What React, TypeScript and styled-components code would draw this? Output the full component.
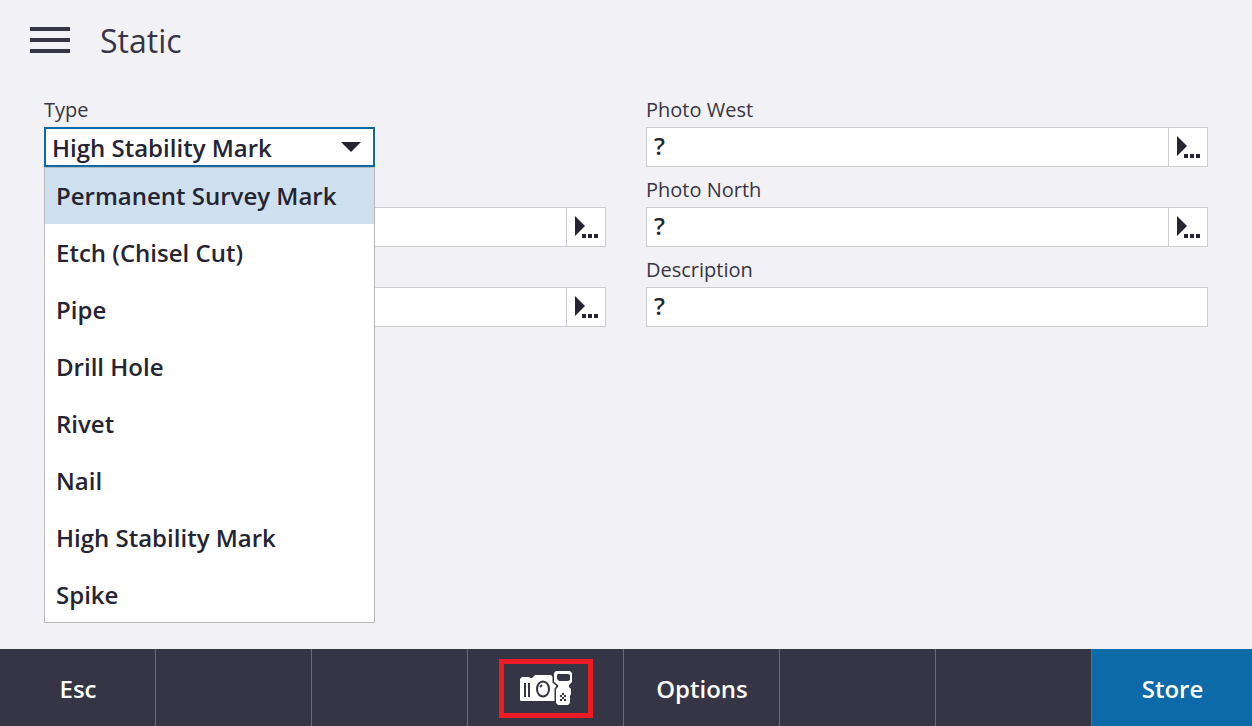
import React, { useState } from "react";
import styled, { createGlobalStyle } from "styled-components";

const ink = "#252433";
const slate = "#363545";
const accent = "#0c6aa9";

const GlobalStyle = createGlobalStyle`
  *, *::before, *::after { box-sizing: border-box; }
  body {
    margin: 0;
    background: #f2f1f6;
    color: ${ink};
    font-family: "Open Sans", sans-serif;
  }
  button, input, select { font: inherit; color: inherit; border-radius: 0; }
`;

const Page = styled.div`
  min-height: 100vh;
  display: flex;
  flex-direction: column;
`;

const Header = styled.header`
  display: flex;
  align-items: center;
  gap: 30px;
  height: 80px;
  padding: 0 30px;
  color: ${slate};
`;

const MenuButton = styled.button`
  display: flex;
  flex-direction: column;
  gap: 7px;
  width: 40px;
  padding: 0;
  border: 0;
  background: none;
  cursor: pointer;
`;

const MenuBar = styled.span`
  height: 4px;
  background: ${slate};
`;

const Title = styled.h1`
  margin: 0;
  padding-top: 2px;
  font-size: 32px;
  line-height: 44px;
  font-weight: 400;
`;

const Form = styled.main`
  flex: 1;
  display: grid;
  grid-template-columns: 1fr 1fr;
  gap: 40px;
  align-items: start;
  padding: 16px 44px 24px;
`;

const Column = styled.div`
  display: flex;
  flex-direction: column;
  gap: 9px;
`;

const Field = styled.div`
  display: flex;
  flex-direction: column;
`;

const Label = styled.label`
  height: 31px;
  font-size: 20px;
  line-height: 28px;
  color: ${slate};
`;

const InputGroup = styled.div`
  display: flex;
  height: 40px;
  border: 1px solid #cdccd2;
  background: #fff;
`;

const TextInput = styled.input`
  flex: 1;
  min-width: 0;
  padding: 0 7px 4px;
  border: 0;
  background: transparent;
  font-size: 24px;
  font-weight: 600;
  outline: none;
`;

const MoreButton = styled.button`
  display: flex;
  align-items: center;
  justify-content: center;
  width: 39px;
  padding: 0 0 0 2px;
  border: 0;
  border-left: 1px solid #cdccd2;
  background: #fff;
  cursor: pointer;
`;

const Combo = styled.div`
  position: relative;
  width: 331px;
  max-width: 100%;
`;

const Select = styled.select`
  display: block;
  width: 100%;
  height: 40px;
  padding: 0 40px 0 6px;
  border: 2px solid ${accent};
  background: #fff;
  font-size: 24px;
  font-weight: 600;
  appearance: none;
  outline: none;
`;

const Arrow = styled.svg`
  position: absolute;
  top: 15px;
  right: 14px;
  pointer-events: none;
`;

const OptionList = styled.ul`
  position: absolute;
  top: 100%;
  left: 0;
  right: 0;
  z-index: 1;
  margin: 0;
  padding: 0;
  list-style: none;
  background: #fff;

  &::after {
    content: "";
    position: absolute;
    inset: 0;
    border: 1px solid #b9b9bb;
    pointer-events: none;
  }
`;

const Option = styled.li<{ $active: boolean }>`
  height: 57px;
  padding: 0 12px;
  background: ${(p) => (p.$active ? "#cee0ee" : "transparent")};
  font-size: 24px;
  font-weight: 600;
  line-height: 57px;
  white-space: nowrap;
  cursor: pointer;
`;

const Softkeys = styled.footer`
  display: grid;
  grid-template-columns: repeat(7, 156fr) 160fr;
  height: 77px;
  background: ${slate};
`;

const Softkey = styled.button<{ $primary?: boolean }>`
  display: flex;
  align-items: center;
  justify-content: center;
  min-width: 0;
  padding: 2px 0 0 1px;
  border: 0;
  border-right: ${(p) => (p.$primary ? "0" : "1px solid #6a6977")};
  background: ${(p) => (p.$primary ? accent : slate)};
  color: #fff;
  font-size: 24px;
  line-height: 32px;
  font-weight: 600;
  cursor: pointer;
`;

const Highlight = styled.span`
  display: flex;
  align-items: center;
  justify-content: center;
  width: 94px;
  height: 59px;
  border: 5px solid #ed1c24;
`;

function MoreIcon() {
  return (
    <svg width="24" height="22" viewBox="0 0 24 22" fill={ink} aria-hidden="true">
      <path d="M0 0L10 10L0 20Z" />
      <path d="M7 18h4v4H7zM13 18h4v4h-4zM19 18h4v4h-4z" />
    </svg>
  );
}

function CameraIcon() {
  return (
    <svg width="52" height="35" viewBox="0 0 52 35" aria-hidden="true">
      <path
        fill="#fff"
        d="M1 7L2 6H9L10 7H12L15 4H31L33 6V8H36V30H1L0 29V8Z"
      />
      <path fill={slate} d="M4 12h2v14h-2zM8 12h2v14h-2z" />
      <ellipse cx="23" cy="18" rx="6" ry="7.500" fill="#fff" stroke={slate} strokeWidth="2" />
      <path d="M20 16L22 14" stroke={slate} strokeWidth="2" />
      <path
        fill="#fff"
        stroke={slate}
        strokeWidth="3"
        paintOrder="stroke"
        d="M36 0H50L52 2V11L49 14V16L51 18V23L50 25V32L48 34H38L36 32V18L38 16V14L34 11V2Z"
      />
      <path fill={slate} d="M38 3H48L50 4V9L48 10H39L37 8V4Z" />
      <path
        fill={slate}
        shapeRendering="crispEdges"
        d="M42 22h2v2h-2zM40 24h2v2h-2zM44 24h2v2h-2zM42 26h2v2h-2zM40 28h2v2h-2zM44 28h2v2h-2z"
      />
    </svg>
  );
}

interface TextFieldProps {
  id: string;
  label?: string;
  initial?: string;
  more?: boolean;
}

function TextField({ id, label, initial = "", more = false }: TextFieldProps) {
  const [value, setValue] = useState(initial);
  return (
    <Field>
      <Label htmlFor={id}>{label}</Label>
      <InputGroup>
        <TextInput
          id={id}
          aria-label={label ?? "Value"}
          value={value}
          onChange={(e) => setValue(e.target.value)}
        />
        {more && (
          <MoreButton type="button" aria-label="More">
            <MoreIcon />
          </MoreButton>
        )}
      </InputGroup>
    </Field>
  );
}

const types = [
  "Permanent Survey Mark",
  "Etch (Chisel Cut)",
  "Pipe",
  "Drill Hole",
  "Rivet",
  "Nail",
  "High Stability Mark",
  "Spike",
];

export default function App() {
  const [type, setType] = useState("High Stability Mark");
  const [active, setActive] = useState(0);

  return (
    <Page>
      <GlobalStyle />
      <Header>
        <MenuButton type="button" aria-label="Menu">
          <MenuBar />
          <MenuBar />
          <MenuBar />
        </MenuButton>
        <Title>Static</Title>
      </Header>
      <Form>
        <Column>
          <Field>
            <Label htmlFor="type">Type</Label>
            <Combo>
              <Select id="type" value={type} onChange={(e) => setType(e.target.value)}>
                {types.map((t) => (
                  <option key={t}>{t}</option>
                ))}
              </Select>
              <Arrow width="20" height="10" viewBox="0 0 20 10" aria-hidden="true">
                <path fill={ink} d="M0 0H20L10 10Z" />
              </Arrow>
              <OptionList role="listbox" aria-label="Type">
                {types.map((t, i) => (
                  <Option
                    key={t}
                    role="option"
                    aria-selected={t === type}
                    $active={i === active}
                    onMouseEnter={() => setActive(i)}
                    onClick={() => setType(t)}
                  >
                    {t}
                  </Option>
                ))}
              </OptionList>
            </Combo>
          </Field>
          <TextField id="value-1" more />
          <TextField id="value-2" more />
        </Column>
        <Column>
          <TextField id="photo-west" label="Photo West" initial="?" more />
          <TextField id="photo-north" label="Photo North" initial="?" more />
          <TextField id="description" label="Description" initial="?" />
        </Column>
      </Form>
      <Softkeys>
        <Softkey type="button">Esc</Softkey>
        <Softkey type="button" aria-label="Unassigned" />
        <Softkey type="button" aria-label="Unassigned" />
        <Softkey type="button" aria-label="Camera">
          <Highlight>
            <CameraIcon />
          </Highlight>
        </Softkey>
        <Softkey type="button">Options</Softkey>
        <Softkey type="button" aria-label="Unassigned" />
        <Softkey type="button" aria-label="Unassigned" />
        <Softkey type="button" $primary>
          Store
        </Softkey>
      </Softkeys>
    </Page>
  );
}
